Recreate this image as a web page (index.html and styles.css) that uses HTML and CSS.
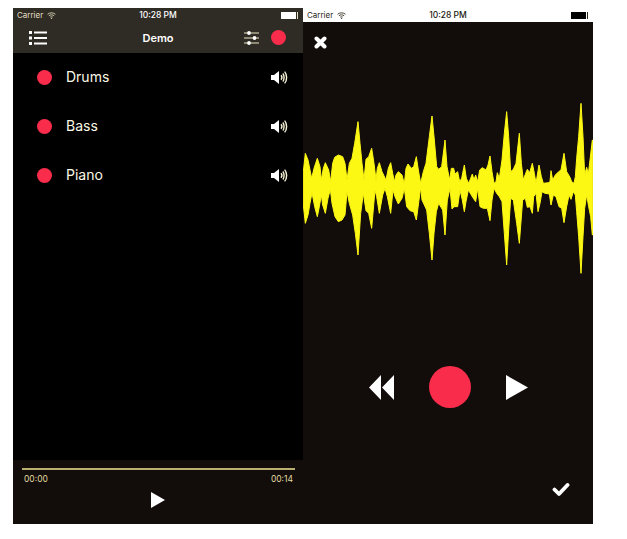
FILE: index.html
```html
<!DOCTYPE html>
<html>
	<head>
		<title>Demo</title>
		<link rel="stylesheet" href="styles.css">
	</head>
	<body>
		<div class="screens">
			<div class="phone phone-list">
				<div class="top-bar">
					<div class="status">
						<span class="carrier">Carrier
							<svg class="wifi" viewBox="0 0 10 8"><path d="M0.5 2.6C3 0.4 7 0.4 9.5 2.6M2 4.3C3.7 2.9 6.3 2.9 8 4.3M3.6 5.9C4.5 5.3 5.5 5.3 6.4 5.9" fill="none" stroke="currentColor" stroke-width="1"/><circle cx="5" cy="7.2" r="0.7" fill="currentColor"/></svg>
						</span>
						<span class="clock">10:28 PM</span>
						<span class="battery"><i></i></span>
					</div>
					<div class="nav">
						<svg class="list-icon" viewBox="0 0 18 14"><path d="M0 0h3v3H0zM0 5.5h3v3H0zM0 11h3v3H0zM5 .5h13v2H5zM5 6h13v2H5zM5 11.500h13v2H5z" fill="#fff"/></svg>
						<span class="nav-title">Demo</span>
						<svg class="mixer-icon" viewBox="0 0 15 14"><path d="M0 2h15M0 7h15M0 12h15" stroke="#efe9c8" stroke-width="1.200"/><circle cx="5" cy="2" r="1.900" fill="#fff"/><circle cx="10.500" cy="7" r="1.900" fill="#fff"/><circle cx="5" cy="12" r="1.900" fill="#fff"/></svg>
						<span class="dot"></span>
					</div>
				</div>

				<div class="tracks">
					<div class="track">
						<span class="dot"></span>
						<span class="track-name">Drums</span>
						<svg class="speaker" viewBox="0 0 17 15"><use href="#speaker-shape"/></svg>
					</div>
					<div class="track">
						<span class="dot"></span>
						<span class="track-name">Bass</span>
						<svg class="speaker" viewBox="0 0 17 15"><use href="#speaker-shape"/></svg>
					</div>
					<div class="track">
						<span class="dot"></span>
						<span class="track-name">Piano</span>
						<svg class="speaker" viewBox="0 0 17 15"><use href="#speaker-shape"/></svg>
					</div>
				</div>

				<div class="player">
					<div class="progress"></div>
					<div class="times">
						<span>00:00</span>
						<span>00:14</span>
					</div>
					<svg class="player-play" viewBox="0 0 14 16"><path d="M0 0L14 8L0 16Z" fill="#fff"/></svg>
				</div>
			</div>

			<div class="phone phone-record">
				<div class="status status-light">
					<span class="carrier">Carrier
						<svg class="wifi" viewBox="0 0 10 8"><path d="M0.5 2.6C3 0.4 7 0.4 9.5 2.6M2 4.3C3.7 2.9 6.3 2.9 8 4.3M3.6 5.9C4.5 5.3 5.5 5.3 6.4 5.9" fill="none" stroke="currentColor" stroke-width="1"/><circle cx="5" cy="7.2" r="0.7" fill="currentColor"/></svg>
					</span>
					<span class="clock">10:28 PM</span>
					<span class="battery"><i></i></span>
				</div>
				<div class="close-row">
					<svg class="close-icon" viewBox="0 0 13 13"><path d="M2.500 2.500L10.500 10.500M10.500 2.500L2.500 10.500" stroke="#fff" stroke-width="4" stroke-linecap="round"/></svg>
				</div>
				<svg class="wave" viewBox="9 0 870 540" preserveAspectRatio="none">
					<polygon fill="#fdf714" stroke="#fdf714" stroke-width="3" stroke-linejoin="round" points="10,215 16,160 24,180 35,235 42,205 52,175 60,200 64,240 70,205 76,188 86,210 92,245 98,190 104,172 115,165 128,170 135,190 141,240 148,190 156,175 164,130 174,65 180,130 186,190 192,240 198,178 206,170 215,145 222,190 228,240 232,205 238,188 246,215 258,240 265,205 272,188 278,220 283,245 288,225 295,215 306,225 313,252 318,205 324,192 334,205 341,200 349,170 355,210 362,250 370,215 378,190 388,110 396,48 403,120 410,200 416,208 425,200 435,120 441,200 449,240 454,205 461,205 465,222 473,215 479,245 485,235 493,195 499,235 506,250 512,235 517,222 522,240 527,225 533,245 539,210 547,203 558,210 564,195 570,168 576,215 582,250 588,245 592,218 598,235 606,180 613,100 620,35 626,110 632,215 640,208 648,190 658,100 664,190 670,240 677,220 682,208 689,218 697,190 703,220 708,250 712,225 717,195 724,230 730,250 745,248 750,245 753,212 758,240 766,225 776,215 783,210 792,160 800,215 810,232 815,245 822,250 826,230 830,175 836,110 843,10 849,110 854,225 860,202 865,222 870,180 877,120 878,120
					878,405 877,405 872,350 866,320 860,285 854,325 849,410 843,520 836,410 830,335 826,285 820,275 813,298 807,285 800,320 792,368 785,325 777,320 768,290 760,285 753,315 748,282 735,280 726,275 720,310 714,335 708,280 701,290 697,340 690,320 682,322 676,295 668,300 658,430 650,370 640,300 632,295 626,390 620,495 613,400 606,305 598,290 590,280 582,265 576,300 570,362 562,325 550,325 540,320 533,265 527,305 520,295 514,285 505,270 498,305 493,335 487,300 480,270 473,320 462,320 456,327 450,265 442,300 435,405 428,330 416,310 409,335 402,400 396,480 388,400 380,330 366,300 362,262 355,315 349,360 341,335 330,332 320,320 313,265 306,295 295,312 285,290 279,270 272,340 262,290 255,265 248,285 238,340 230,290 225,270 215,385 206,340 198,332 190,280 182,340 174,465 166,400 158,345 148,310 141,275 135,345 126,360 115,365 105,350 96,310 91,268 84,295 76,340 68,315 64,285 58,320 52,350 44,320 36,278 30,310 24,345 16,370 10,315"/>
				</svg>
				<div class="controls">
					<svg class="rewind" viewBox="0 0 25 25"><path d="M12 0V25L0 12.500ZM25 0V25L13 12.500Z" fill="#fff"/></svg>
					<span class="record"></span>
					<svg class="play" viewBox="0 0 22 25"><path d="M0 0L22 12.500L0 25Z" fill="#fff"/></svg>
				</div>
				<div class="done-row">
					<svg class="check-icon" viewBox="0 0 18 15"><path d="M2.500 7.500L7 12L15.500 3" fill="none" stroke="#fff" stroke-width="3.800" stroke-linecap="round" stroke-linejoin="round"/></svg>
				</div>
			</div>
		</div>

		<svg class="defs" width="0" height="0">
			<symbol id="speaker-shape" viewBox="0 0 17 15">
				<path d="M0 5H3L8 1V14L3 10H0Z" fill="#fff"/>
				<path d="M10 5.200C11 6.400 11 8.600 10 9.800M11.800 3.500C13.500 5.500 13.500 9.500 11.800 11.500M13.600 1.600C16.300 4.600 16.300 10.400 13.600 13.400" fill="none" stroke="#f8f4d8" stroke-width="1.400"/>
			</symbol>
		</svg>
	</body>
</html>
```

FILE: styles.css
```css
body{
	margin: 0;
	background: #fff;
	font-family: "Inter", "Liberation Sans", sans-serif;
}
.screens{
	display: flex;
	padding: 8px 0 0 13px;
}
.phone{
	display: flex;
	flex-direction: column;
	width: 290px;
	height: 516px;
}
.phone-list{
	background: #000;
}
.phone-record{
	background: #120c0a;
}
.top-bar{
	height: 45px;
	color: #efe9c8;
	background-color: #2f2b25;
	background-image: radial-gradient(#191612 0.5px, transparent 0.7px);
	background-size: 4px 4px;
}
.status{
	display: grid;
	grid-template-columns: 1fr auto 1fr;
	align-items: center;
	height: 14px;
	padding: 0 4px;
	font-size: 8px;
	color: #e4dfc0;
}
.status-light{
	background: #fff;
	color: #2a2718;
}
.carrier{
	display: flex;
	align-items: center;
	gap: 4px;
}
.wifi{
	width: 9px;
	height: 7px;
}
.clock{
	font-size: 8.500px;
	font-weight: 500;
	color: #fff;
}
.status-light .clock{
	color: #1c1a10;
}
.battery{
	justify-self: end;
	display: block;
	width: 15px;
	height: 7px;
	margin-right: 1px;
	border-right: 1px solid currentColor;
	padding-right: 1px;
}
.battery i{
	display: block;
	height: 7px;
	background: #fff;
}
.status-light .battery i{
	background: #000;
}
.nav{
	display: flex;
	align-items: center;
	height: 31px;
	padding: 0 17px 0 16px;
}
.list-icon{
	width: 18px;
	height: 14px;
}
.nav-title{
	flex: 1;
	text-align: center;
	font-size: 11px;
	font-weight: 600;
	color: #fff;
	padding-left: 25px;
}
.mixer-icon{
	width: 15px;
	height: 14px;
	margin-right: 12px;
}
.dot{
	width: 15px;
	height: 15px;
	border-radius: 50%;
	background: #f92c4b;
}
.tracks{
	flex: 1;
}
.track{
	display: flex;
	align-items: center;
	height: 49px;
	padding: 0 15px 0 24px;
}
.track .dot{
	margin-top: -1px;
}
.track-name{
	flex: 1;
	margin: -2px 0 0 14px;
	font-size: 14px;
	color: #fbf8e6;
}
.speaker{
	width: 17px;
	height: 15px;
	margin-top: -1px;
}
.defs{
	position: absolute;
}
.player{
	display: flex;
	flex-direction: column;
	height: 64px;
	background: #120c0a;
	padding: 8px 8px 0 9px;
	box-sizing: border-box;
}
.progress{
	height: 2px;
	background: #b9b06f;
}
.times{
	display: flex;
	justify-content: space-between;
	margin-top: 4px;
	padding: 0 2px;
	font-size: 8.500px;
	line-height: 11px;
	color: #e0dca0;
}
.player-play{
	align-self: center;
	width: 14px;
	height: 16px;
	margin: 7px 2px 0 0;
}
.close-row{
	height: 78px;
	padding: 14px 0 0 11px;
	box-sizing: border-box;
}
.close-icon{
	display: block;
	width: 13px;
	height: 13px;
}
.wave{
	display: block;
	width: 290px;
	height: 180px;
}
.controls{
	display: flex;
	align-items: center;
	justify-content: center;
	gap: 35px;
	height: 44px;
	margin-top: 85px;
}
.rewind{
	width: 25px;
	height: 25px;
}
.record{
	width: 42px;
	height: 42px;
	border-radius: 50%;
	background: #f92c4b;
}
.play{
	width: 22px;
	height: 25px;
}
.done-row{
	display: flex;
	justify-content: flex-end;
	margin-top: auto;
	padding: 0 23px 27px 0;
}
.check-icon{
	width: 18px;
	height: 15px;
}
```
